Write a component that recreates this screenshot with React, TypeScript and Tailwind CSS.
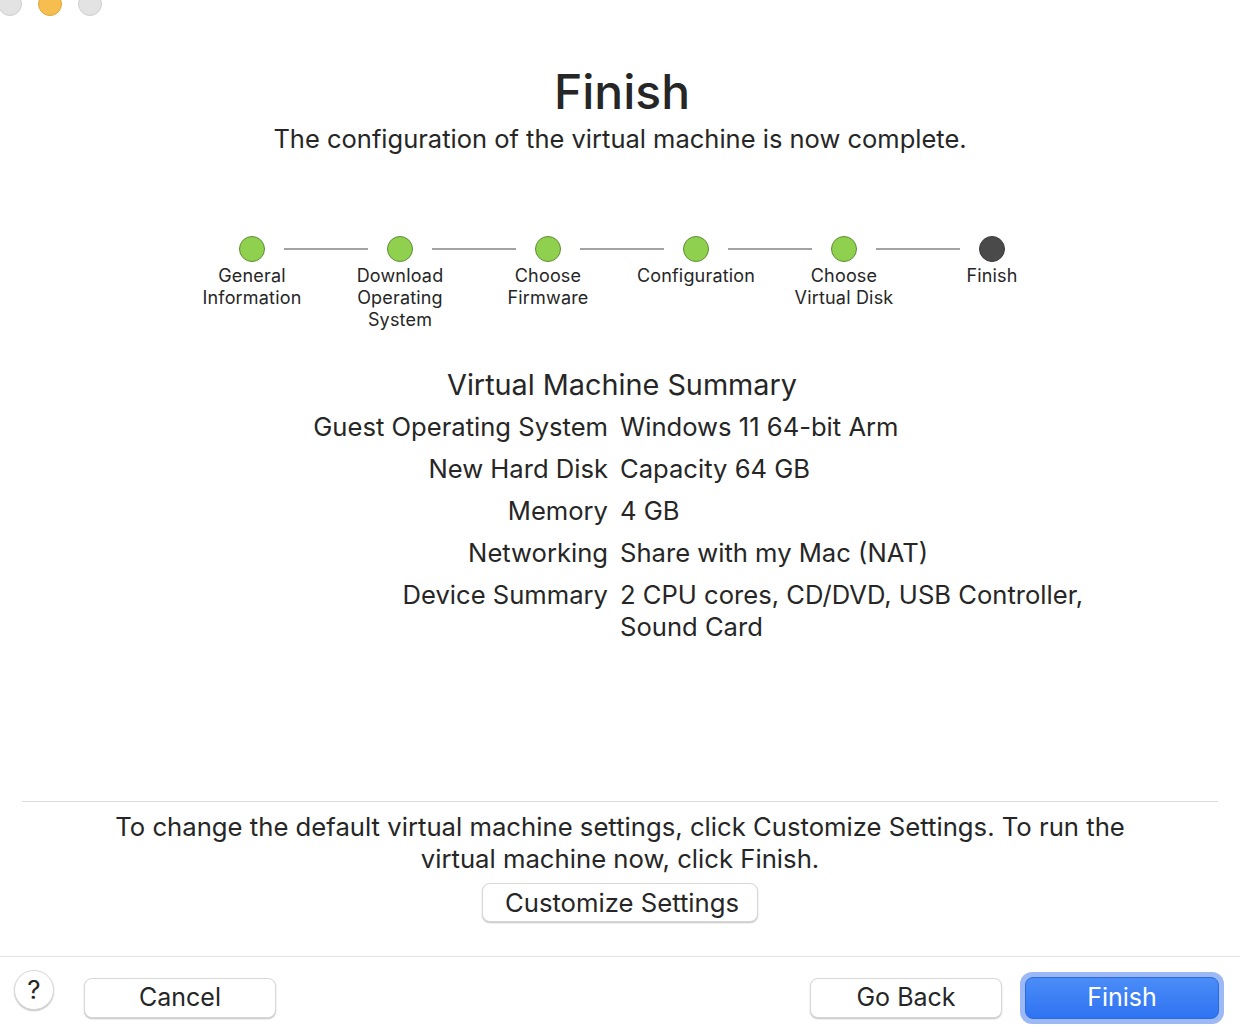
import React from 'react'

const steps = [
  { label: ['General', 'Information'], done: true },
  { label: ['Download', 'Operating', 'System'], done: true },
  { label: ['Choose', 'Firmware'], done: true },
  { label: ['Configuration'], done: true },
  { label: ['Choose', 'Virtual Disk'], done: true },
  { label: ['Finish'], done: false },
]

const summary = [
  { k: 'Guest Operating System', v: ['Windows 11 64-bit Arm'] },
  { k: 'New Hard Disk', v: ['Capacity 64 GB'] },
  { k: 'Memory', v: ['4 GB'] },
  { k: 'Networking', v: ['Share with my Mac (NAT)'] },
  { k: 'Device Summary', v: ['2 CPU cores, CD/DVD, USB Controller,', 'Sound Card'] },
]

export default function App() {
  return (
    <div className="relative w-[1240px] h-[1034px] bg-white overflow-hidden font-['Inter',sans-serif] text-[#262626] flex flex-col">
      {/* window controls */}
      <div className="absolute left-[-2px] top-[-8px] flex gap-[16px]">
        <div className="w-[24px] h-[24px] rounded-full bg-[#e3e3e3] border border-[#cfcfcf]" />
        <div className="w-[24px] h-[24px] rounded-full bg-[#f6be4f] border border-[#dea63a]" />
        <div className="w-[24px] h-[24px] rounded-full bg-[#e3e3e3] border border-[#cfcfcf]" />
      </div>

      <div className="pt-[62px] text-center">
        <h1 className="text-[48px] leading-[60px] font-medium pl-[4px]">Finish</h1>
        <p className="text-[25.5px] leading-[32px] mt-[1px]">The configuration of the virtual machine is now complete.</p>
      </div>

      <div className="mt-[81px] ml-[178px] grid grid-cols-[repeat(6,148px)]">
        {steps.map((s, i) => (
          <div key={i} className="flex flex-col items-center">
            <div className="flex items-center">
              <div className={`w-[42px] h-[2px] ${i === 0 ? '' : 'bg-[#a3a3a3]'}`} />
              <div className="w-[19px]" />
              <div
                className={`w-[26px] h-[26px] rounded-full border ${
                  s.done ? 'bg-[#8fd14f] border-[#5e8c33]' : 'bg-[#4a4a4a] border-[#3a3a3a]'
                }`}
              />
              <div className="w-[19px]" />
              <div className={`w-[42px] h-[2px] ${i === steps.length - 1 ? '' : 'bg-[#a3a3a3]'}`} />
            </div>
            <div className="mt-[3px] text-[18px] tracking-[0.01em] leading-[22px] text-center">
              {s.label.map((l) => (
                <div key={l}>{l}</div>
              ))}
            </div>
          </div>
        ))}
      </div>

      <h2 className="mt-[36px] text-center text-[28.8px] leading-[36px] pl-[4px]">Virtual Machine Summary</h2>

      <div className="mt-[8px] grid grid-cols-[1fr_1fr] gap-x-[12px] gap-y-[10px] w-[1228px] text-[25.6px] leading-[32px]">
        {summary.map((r) => (
          <React.Fragment key={r.k}>
            <div className="text-right">{r.k}</div>
            <div>
              {r.v.map((l) => (
                <div key={l}>{l}</div>
              ))}
            </div>
          </React.Fragment>
        ))}
      </div>

      <div className="flex-1" />

      <div className="mx-[22px] h-px bg-[#dcdcdc]" />
      <div className="pt-[9px] text-center text-[25.7px] leading-[32px] px-[80px]">
        To change the default virtual machine settings, click Customize Settings. To run the virtual machine now, click Finish.
      </div>
      <div className="mt-[8px] flex justify-center">
        <button className="w-[276px] h-[39px] rounded-[8px] bg-white border border-[#d9d9d9] shadow-[0_1px_1.5px_rgba(0,0,0,0.25)] text-[25.7px] pl-[4px]">
          Customize Settings
        </button>
      </div>

      <div className="mt-[34px] h-px bg-[#e3e3e3]" />
      <div className="h-[77px] flex items-center pl-[14px] pr-[16px] pt-[5px]">
        <button className="w-[40px] h-[40px] rounded-full bg-white border border-[#d9d9d9] shadow-[0_1px_1.5px_rgba(0,0,0,0.25)] text-[26px] leading-none -mt-[16px]">
          ?
        </button>
        <button className="ml-[30px] w-[192px] h-[40px] rounded-[8px] bg-white border border-[#d9d9d9] shadow-[0_1px_1.5px_rgba(0,0,0,0.25)] text-[25px]">
          Cancel
        </button>
        <div className="flex-1" />
        <button className="w-[192px] h-[40px] rounded-[8px] bg-white border border-[#d9d9d9] shadow-[0_1px_1.5px_rgba(0,0,0,0.25)] text-[25px]">
          Go Back
        </button>
        <div className="ml-[18px] p-[5px] rounded-[12px] bg-[#9db9f5]">
          <button className="w-[194px] h-[42px] rounded-[8px] bg-gradient-to-b from-[#4a8cf7] to-[#2f73f2] border border-[#2b6ae0] text-white text-[25px]">
            Finish
          </button>
        </div>
      </div>
    </div>
  )
}
